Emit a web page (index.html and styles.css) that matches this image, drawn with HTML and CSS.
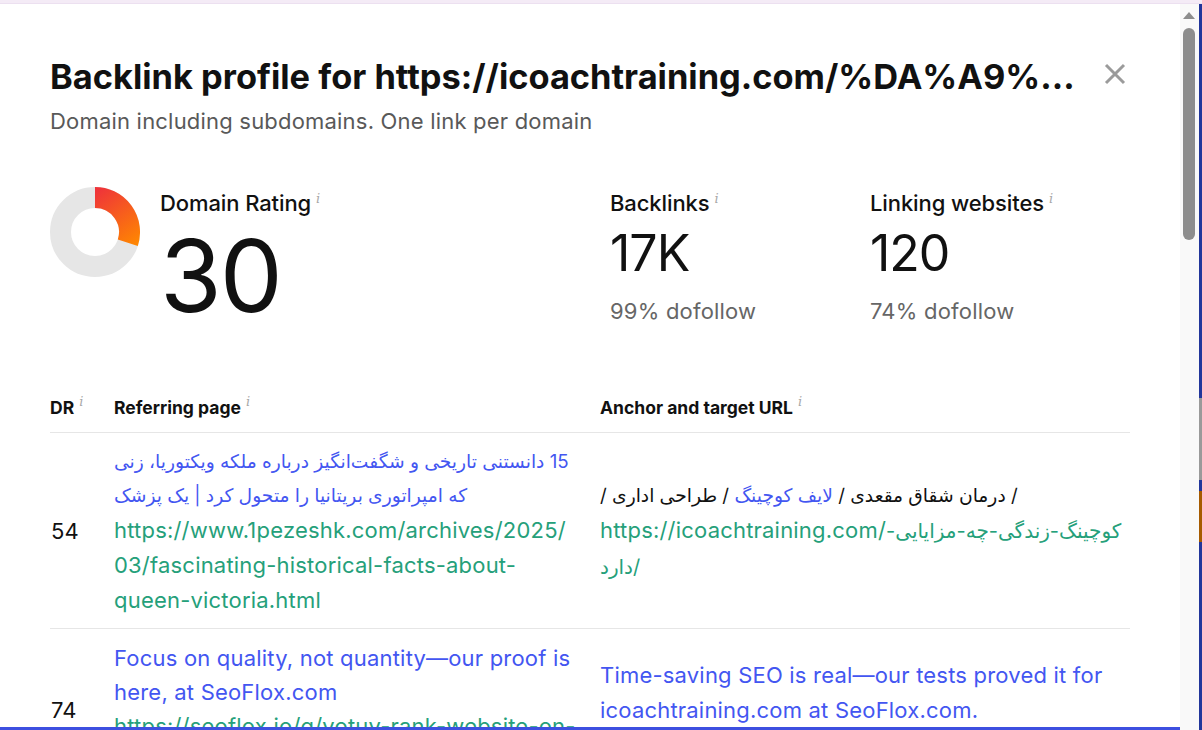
FILE: index.html
```html
<!DOCTYPE html>
<html lang="en">

<head>
    <meta charset="UTF-8">
    <meta name="viewport" content="width=device-width, initial-scale=1.0">
    <title>Backlink profile</title>
    <link rel="stylesheet" href="styles.css">
</head>

<body>
    <div class="screen">
        <div class="top-strip"></div>
        <div class="frame">
            <div class="modal">
                <div class="modal-body">
                    <div class="modal-head">
                        <h1 class="modal-title">Backlink profile for https://icoachtraining.com/%DA%A9%D9%88%DA%86%DB%8C%D9%86%DA%AF-%D8%B2%D9%86%D8%AF%DA%AF%DB%8C/</h1>
                        <button class="close-btn" aria-label="Close">
                            <svg width="22" height="22" viewBox="0 0 22 22">
                                <path d="M2 2 L20 20 M20 2 L2 20" stroke="#9b9b9b" stroke-width="3" fill="none" />
                            </svg>
                        </button>
                    </div>
                    <p class="modal-sub">Domain including subdomains. One link per domain</p>

                    <div class="stats">
                        <div class="stat stat-dr">
                            <svg class="donut" width="90" height="90" viewBox="0 0 90 90">
                                <defs>
                                    <linearGradient id="dr-grad" gradientUnits="userSpaceOnUse" x1="45" y1="5" x2="85" y2="60">
                                        <stop offset="0" stop-color="#ef3439" />
                                        <stop offset="1" stop-color="#ff8800" />
                                    </linearGradient>
                                </defs>
                                <circle cx="45" cy="45" r="34.5" fill="none" stroke="#e6e6e6" stroke-width="21" />
                                <path d="M45 10.5 A34.5 34.5 0 0 1 77.81 55.66" fill="none" stroke="url(#dr-grad)" stroke-width="21" />
                            </svg>
                            <div>
                                <div class="stat-label">Domain Rating<sup class="info">i</sup></div>
                                <div class="stat-big">30</div>
                            </div>
                        </div>
                        <div class="stat stat-links">
                            <div class="stat-label">Backlinks<sup class="info">i</sup></div>
                            <div class="stat-num">17K</div>
                            <div class="stat-sub">99% dofollow</div>
                        </div>
                        <div class="stat">
                            <div class="stat-label">Linking websites<sup class="info">i</sup></div>
                            <div class="stat-num">120</div>
                            <div class="stat-sub">74% dofollow</div>
                        </div>
                    </div>

                    <table class="links">
                        <colgroup>
                            <col class="col-dr">
                            <col class="col-ref">
                            <col>
                        </colgroup>
                        <thead>
                            <tr>
                                <th>DR<sup class="info">i</sup></th>
                                <th>Referring page<sup class="info">i</sup></th>
                                <th>Anchor and target URL<sup class="info">i</sup></th>
                            </tr>
                        </thead>
                        <tbody>
                            <tr>
                                <td class="dr">54</td>
                                <td>
                                    <div class="ref-title">
                                        <span class="rtl">15 دانستنی تاریخی و شگفت‌انگیز درباره ملکه ویکتوریا، زنی</span>
                                        <span class="rtl">که امپراتوری بریتانیا را متحول کرد | یک پزشک</span>
                                    </div>
                                    <div class="url"><span class="nw">https://www.1pezeshk.com/archives/2025/</span><wbr><span class="nw">03/fascinating-historical-facts-about-</span><wbr><span class="nw">queen-victoria.html</span></div>
                                </td>
                                <td class="last">
                                    <div class="anchor">/ درمان شقاق مقعدی / <span class="anchor-link">لایف کوچینگ</span> / طراحی اداری /</div>
                                    <div class="url"><span class="nw">https://icoachtraining.com/<span class="fa">کوچینگ-زندگی-چه-مزایایی-</span></span><wbr><span class="fa">دارد/</span></div>
                                </td>
                            </tr>
                            <tr>
                                <td class="dr">74</td>
                                <td>
                                    <div class="ref-title">
                                        <span class="nw-line">Focus on quality, not quantity—our proof is</span>
                                        <span class="nw-line">here, at SeoFlox.com</span>
                                    </div>
                                    <div class="url"><span class="nw">https://seoflox.io/g/yotuy-rank-website-on-</span><wbr><span class="nw">google-first-page</span></div>
                                </td>
                                <td class="last">
                                    <div class="anchor-link">Time-saving SEO is real—our tests proved it for<br>icoachtraining.com at SeoFlox.com.</div>
                                    <div class="url nw">https://icoachtraining.com/</div>
                                </td>
                            </tr>
                        </tbody>
                    </table>
                </div>
                <div class="bottom-bar"></div>
            </div>

            <!-- scrollbar of the dialog -->
            <div class="scrollbar">
                <div class="sb-arrow"></div>
                <div class="sb-thumb"></div>
            </div>

            <!-- page behind the dialog -->
            <div class="edge">
                <div class="edge-grey"></div>
                <div class="edge-orange"></div>
            </div>
        </div>
    </div>
</body>

</html>
```

FILE: styles.css
```css
* {
    margin: 0;
    padding: 0;
    box-sizing: border-box;
}

body {
    font-family: Inter, "DejaVu Sans", sans-serif;
    color: #111;
    background-color: #fff;
}

.screen {
    height: 730px;
    display: flex;
    flex-direction: column;
    overflow: hidden;
}

.top-strip {
    height: 4px;
    background-color: #f4ebf6;
    border-bottom: 1px solid #ece0f0;
}

.frame {
    flex: 1;
    display: flex;
    min-height: 0;
}

.modal {
    flex: 1;
    min-width: 0;
    display: flex;
    flex-direction: column;
    background-color: #fff;
}

.modal-body {
    flex: 1;
    min-height: 0;
    overflow: hidden;
    padding: 51px 50px 0;
}

.bottom-bar {
    height: 3px;
    background-color: #3d4fe0;
}

/* Header */
.modal-head {
    display: flex;
    align-items: center;
    gap: 24px;
}

.modal-title {
    flex: 1;
    min-width: 0;
    font-size: 34.4px;
    line-height: 44px;
    font-weight: 700;
    white-space: nowrap;
    overflow: hidden;
    text-overflow: ellipsis;
}

.close-btn {
    width: 22px;
    height: 22px;
    margin: -6px 4px 0 0;
    border: 0 none;
    background: none;
    display: flex;
}

.modal-sub {
    margin-top: 8px;
    font-size: 22px;
    line-height: 28px;
    letter-spacing: 0.2px;
    color: #595959;
}

/* Stats */
.stats {
    display: flex;
    margin-top: 52px;
}

.stat-dr {
    width: 560px;
    display: flex;
    gap: 20px;
}

.stat-links {
    width: 260px;
}

.stat-label {
    padding-top: 2px;
    font-size: 22px;
    line-height: 28px;
    font-weight: 500;
    letter-spacing: -0.1px;
}

.info {
    margin-left: 5px;
    font-family: "DejaVu Serif", serif;
    font-style: italic;
    font-size: 13px;
    font-weight: 400;
    letter-spacing: 0;
    color: #a8a8a8;
    vertical-align: 8px;
    line-height: 0;
}

.stat-big {
    margin-top: 9px;
    font-size: 100px;
    line-height: 100px;
    letter-spacing: -2px;
}

.stat-num {
    margin-top: 11px;
    font-size: 50px;
    line-height: 50px;
    letter-spacing: -1px;
}

.stat-sub {
    margin-top: 19px;
    font-size: 22px;
    line-height: 28px;
    letter-spacing: 0.2px;
    color: #666;
}

/* Table */
.links {
    width: 100%;
    margin-top: 70px;
    border-collapse: collapse;
    table-layout: fixed;
}

.col-dr {
    width: 64px;
}

.col-ref {
    width: 486px;
}

.links th {
    text-align: left;
    font-size: 17.5px;
    line-height: 24px;
    font-weight: 700;
    padding: 0 0 12px;
    border-bottom: 1px solid #e6e6e6;
}

.links td {
    padding: 12px 16px 10px 0;
    vertical-align: middle;
    border-bottom: 1px solid #e6e6e6;
    font-size: 22px;
    line-height: 35px;
    letter-spacing: 0.2px;
}

.links td.dr {
    padding-left: 1px;
}

.links td.last {
    padding-right: 10px;
}

.ref-title {
    color: #4356f1;
    line-height: 34px;
}

.rtl {
    display: block;
    direction: rtl;
    text-align: left;
    font-size: 18.7px;
    letter-spacing: 0;
    white-space: nowrap;
}

.fa {
    font-size: 20px;
    letter-spacing: 0;
}

.nw-line {
    display: block;
    white-space: nowrap;
}

.nw {
    white-space: nowrap;
}

.url {
    color: #25a07a;
}

.anchor {
    font-size: 18.7px;
    letter-spacing: 0;
}

.anchor-link {
    color: #4356f1;
}

/* Scrollbar */
.scrollbar {
    width: 19px;
    background-color: #f9f9f9;
    padding-left: 3px;
}

.sb-arrow {
    width: 0;
    height: 0;
    margin-top: 8px;
    border-left: 6px solid transparent;
    border-right: 6px solid transparent;
    border-bottom: 7px solid #8d8d8d;
}

.sb-thumb {
    width: 12px;
    height: 212px;
    margin-top: 9px;
    border-radius: 6px;
    background-color: #8d8d8d;
}

/* Page behind */
.edge {
    width: 3px;
    background-color: #22369b;
}

.edge-grey {
    height: 82px;
    margin-top: 394px;
    background-color: #9a9a9a;
}

.edge-orange {
    height: 51px;
    margin-top: 11px;
    background-color: #a65b00;
}
```
